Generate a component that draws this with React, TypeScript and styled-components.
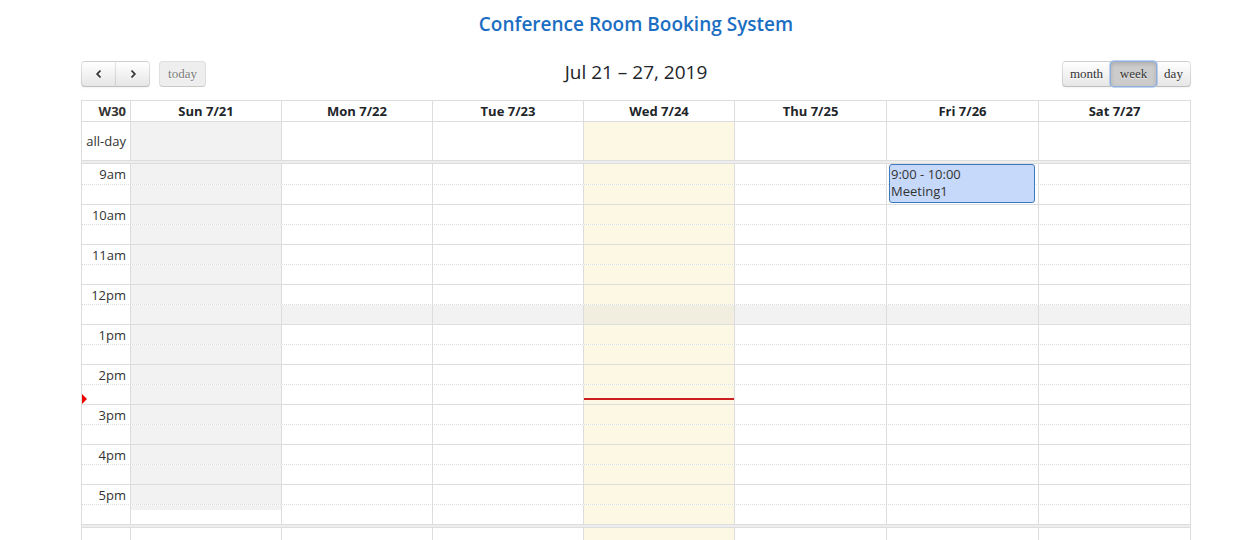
import React from 'react'
import styled, { createGlobalStyle, css } from 'styled-components'

const GlobalStyle = createGlobalStyle`
  html, body {
    margin: 0;
    padding: 0;
    background: #fff;
  }
  body {
    font-family: "Segoe UI", "Open Sans", "Liberation Sans", sans-serif;
    font-size: 13px;
    color: #212529;
  }
`

const DAYS = ['Sun 7/21', 'Mon 7/22', 'Tue 7/23', 'Wed 7/24', 'Thu 7/25', 'Fri 7/26', 'Sat 7/27']
const HOURS = ['9am', '10am', '11am', '12pm', '1pm', '2pm', '3pm', '4pm', '5pm']
const TODAY = 3
const LUNCH_SLOT = 7
const AXIS = 49
const COL_WIDTHS = [151, 151, 151, 151, 152, 152, 152]
const BORDER = '#ddd'

type Tone = 'plain' | 'off' | 'today' | 'todayOff' | 'offEnd'

// background of a day cell for a given slot
const toneFor = (day: number, slot: number): Tone => {
  if (day === TODAY) return slot === LUNCH_SLOT ? 'todayOff' : 'today'
  if (day === 0) return slot === 17 ? 'offEnd' : 'off'
  if (slot === LUNCH_SLOT) return 'off'
  return 'plain'
}

const toneBg = {
  plain: css`background: #fff;`,
  off: css`background: #f2f2f2;`,
  today: css`background: #fcf8e3;`,
  todayOff: css`background: #f1eee0;`,
  offEnd: css`background: linear-gradient(to bottom, #f2f2f2 0, #f2f2f2 5px, #fff 5px);`,
}

const colStart = (day: number) => AXIS + COL_WIDTHS.slice(0, day).reduce((a, b) => a + b, 0)

const Page = styled.div`
  width: 1110px;
  margin-left: 81px;
  padding-top: 10px;
`

const Heading = styled.h1`
  margin: 0 0 23px;
  text-align: center;
  font-size: 19px;
  line-height: 28px;
  font-weight: 600;
  color: #1b6ec2;
`

const Toolbar = styled.div`
  display: flex;
  align-items: center;
  justify-content: space-between;
  height: 26px;
  margin-bottom: 13px;
`

const ToolSide = styled.div`
  display: flex;
  align-items: center;
  gap: 9px;
  width: 240px;
  &:last-child {
    justify-content: flex-end;
  }
`

const ButtonGroup = styled.div`
  display: flex;
  & > button + button {
    margin-left: -1px;
  }
  & > button:first-child {
    border-radius: 4px 0 0 4px;
  }
  & > button:last-child {
    border-radius: 0 4px 4px 0;
  }
`

const ToolButton = styled.button<{ $active?: boolean; $width: number }>`
  height: 26px;
  width: ${(p) => p.$width}px;
  padding: 0;
  display: flex;
  align-items: center;
  justify-content: center;
  font-family: "Liberation Serif", "Times New Roman", serif;
  font-size: 13px;
  color: #333;
  border: 1px solid;
  border-color: rgba(0, 0, 0, 0.1) rgba(0, 0, 0, 0.1) rgba(0, 0, 0, 0.25);
  border-radius: 4px;
  background: linear-gradient(to bottom, #fff, #e6e6e6);
  text-shadow: 0 1px 1px rgba(255, 255, 255, 0.75);
  box-shadow: inset 0 1px 0 rgba(255, 255, 255, 0.2), 0 1px 2px rgba(0, 0, 0, 0.05);
  cursor: pointer;
  position: relative;

  &:disabled {
    opacity: 0.65;
    box-shadow: none;
    cursor: default;
    background: #e6e6e6;
  }

  ${(p) =>
    p.$active &&
    css`
      z-index: 1;
      background: #cccccc;
      border-color: #8eaedb;
      box-shadow: inset 0 2px 4px rgba(0, 0, 0, 0.15), 0 0 0 1px rgba(120, 160, 220, 0.45);
    `}
`

const RangeTitle = styled.h2`
  margin: 0 0 4px;
  font-size: 19px;
  font-weight: 400;
  color: #212529;
  white-space: nowrap;
`

const Grid = styled.div`
  border-left: 1px solid ${BORDER};
  border-top: 1px solid ${BORDER};
`

const Row = styled.div<{ $height: number; $line?: 'solid' | 'dotted' }>`
  display: grid;
  grid-template-columns: ${AXIS}px repeat(4, 151px) repeat(3, 1fr);
  grid-template-rows: minmax(0, 1fr);
  height: ${(p) => p.$height}px;
  box-sizing: border-box;
  border-bottom: 1px ${(p) => p.$line || 'solid'} ${BORDER};
`

const Cell = styled.div<{ $tone?: Tone }>`
  border-right: 1px solid ${BORDER};
  overflow: hidden;
  ${(p) => toneBg[p.$tone || 'plain']}
`

const HeadCell = styled(Cell)`
  display: flex;
  align-items: center;
  justify-content: center;
  font-weight: 700;
  font-size: 13px;
  color: #212529;
`

const AxisCell = styled(Cell)<{ $align?: 'top' | 'center' }>`
  display: flex;
  justify-content: flex-end;
  align-items: ${(p) => (p.$align === 'top' ? 'flex-start' : 'center')};
  padding: ${(p) => (p.$align === 'top' ? '1px' : '0')} 4px 0 0;
  font-size: 13px;
  line-height: 18px;
  color: #333;
  white-space: nowrap;
`

const AxisHead = styled(AxisCell)`
  font-weight: 700;
`

const Divider = styled.div`
  height: 2px;
  background: #eee;
  border-right: 1px solid ${BORDER};
  border-bottom: 1px solid ${BORDER};
`

const TimeBody = styled.div`
  position: relative;
`

const Event = styled.div<{ $day: number }>`
  position: absolute;
  top: 0;
  left: ${(p) => colStart(p.$day) + 2}px;
  width: ${(p) => COL_WIDTHS[p.$day] - 6}px;
  height: 39px;
  box-sizing: border-box;
  padding: 1px 1px;
  background: #c6d9fa;
  border: 1px solid #3b78bd;
  border-radius: 3px;
  font-size: 13px;
  line-height: 17px;
  color: #333;
`

const NowLine = styled.div<{ $day: number; $top: number }>`
  position: absolute;
  top: ${(p) => p.$top}px;
  left: ${(p) => colStart(p.$day)}px;
  width: ${(p) => COL_WIDTHS[p.$day] - 1}px;
  height: 2px;
  background: #cc1f1f;
`

const NowArrow = styled.div<{ $top: number }>`
  position: absolute;
  left: 0;
  top: ${(p) => p.$top - 4}px;
  width: 0;
  height: 0;
  border-top: 5px solid transparent;
  border-bottom: 5px solid transparent;
  border-left: 5px solid #e00;
`

const Chevron: React.FC<{ dir: 'left' | 'right' }> = ({ dir }) => (
  <svg width="8" height="10" viewBox="0 0 8 10">
    <path
      d={dir === 'left' ? 'M5.5 1.5 L2.2 5 L5.5 8.5' : 'M2.5 1.5 L5.8 5 L2.5 8.5'}
      fill="none"
      stroke="#333"
      strokeWidth="1.8"
    />
  </svg>
)

const App: React.FC = () => {
  const slots = Array.from({ length: 18 }, (_, i) => i)
  const nowTop = 234

  return (
    <Page>
      <GlobalStyle />
      <Heading>Conference Room Booking System</Heading>

      <Toolbar>
        <ToolSide>
          <ButtonGroup>
            <ToolButton $width={35} aria-label="prev">
              <Chevron dir="left" />
            </ToolButton>
            <ToolButton $width={35} aria-label="next">
              <Chevron dir="right" />
            </ToolButton>
          </ButtonGroup>
          <ToolButton $width={47} disabled>
            today
          </ToolButton>
        </ToolSide>
        <RangeTitle>Jul 21 – 27, 2019</RangeTitle>
        <ToolSide>
          <ButtonGroup>
            <ToolButton $width={49}>month</ToolButton>
            <ToolButton $width={47} $active>
              week
            </ToolButton>
            <ToolButton $width={35}>day</ToolButton>
          </ButtonGroup>
        </ToolSide>
      </Toolbar>

      <Grid>
        <Row $height={21}>
          <AxisHead>W30</AxisHead>
          {DAYS.map((d) => (
            <HeadCell key={d}>{d}</HeadCell>
          ))}
        </Row>
        <Row $height={39}>
          <AxisCell>all-day</AxisCell>
          {DAYS.map((d, i) => (
            <Cell key={d} $tone={i === 0 ? 'off' : i === TODAY ? 'today' : 'plain'} />
          ))}
        </Row>
        <Divider />

        <TimeBody>
          {slots.map((s) => (
            <Row key={s} $height={s === 0 ? 21 : 20} $line={s % 2 === 0 ? 'dotted' : 'solid'}>
              <AxisCell $align="top">{s % 2 === 0 ? HOURS[s / 2] : ''}</AxisCell>
              {DAYS.map((d, i) => (
                <Cell key={d} $tone={toneFor(i, s)} />
              ))}
            </Row>
          ))}
          <Event $day={5}>
            9:00 - 10:00
            <br />
            Meeting1
          </Event>
          <NowLine $day={TODAY} $top={nowTop} />
          <NowArrow $top={nowTop} />
        </TimeBody>

        <Divider />
        <Row $height={40} $line="solid">
          <AxisCell />
          {DAYS.map((d, i) => (
            <Cell key={d} $tone={i === TODAY ? 'today' : 'plain'} />
          ))}
        </Row>
      </Grid>
    </Page>
  )
}

export default App
